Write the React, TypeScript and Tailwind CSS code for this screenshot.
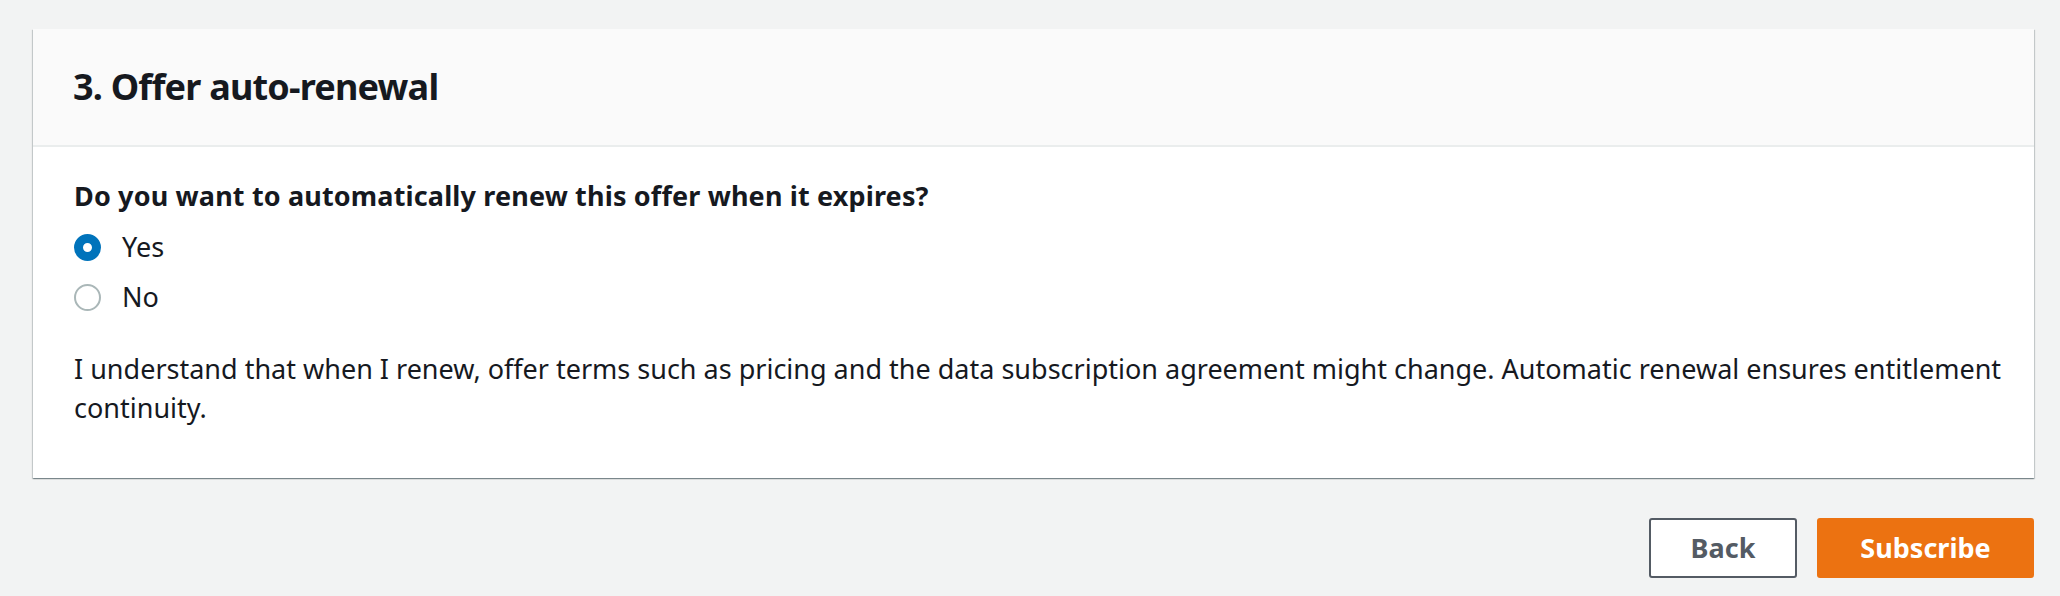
import React, { useState } from 'react';

const App: React.FC = () => {
  const [renew, setRenew] = useState<'yes' | 'no'>('yes');

  const options = [
    { id: 'yes', label: 'Yes' },
    { id: 'no', label: 'No' },
  ] as const;

  return (
    <div
      className="min-h-screen bg-[#f2f3f3] pl-[33px] pr-[26px] pt-[29px] text-[#16191f]"
      style={{ fontFamily: '"Noto Sans", "Open Sans", sans-serif' }}
    >
      {/* Carte principale */}
      <section className="bg-white shadow-[0_1px_1px_0_rgba(0,28,36,0.3),1px_1px_1px_0_rgba(0,28,36,0.15),-1px_1px_1px_0_rgba(0,28,36,0.15)]">
        <header className="bg-[#fafafa] border-b-2 border-[#eaeded] px-[40px] py-[36px]">
          <h2 className="text-[36px] leading-[44px] font-bold tracking-[-0.8px]">3. Offer auto-renewal</h2>
        </header>

        <div className="pl-[41px] pr-[24px] pt-[33px] pb-[51px]">
          <p className="text-[27px] leading-[32px] font-bold tracking-[0.15px]">
            Do you want to automatically renew this offer when it expires?
          </p>

          <div className="mt-[10px] flex flex-col">
            {options.map((opt) => (
              <label
                key={opt.id}
                className="flex h-[50px] items-center gap-[21px] cursor-pointer"
                onClick={() => setRenew(opt.id)}
              >
                <span
                  className={`w-[27px] h-[27px] rounded-full box-border ${
                    renew === opt.id
                      ? 'border-[9px] border-[#0073bb] bg-white'
                      : 'border-2 border-[#aab7b8] bg-white'
                  }`}
                ></span>
                <span className="text-[27px] leading-[36px]">{opt.label}</span>
              </label>
            ))}
          </div>

          <p className="mt-[27px] text-[27px] leading-[39px]">
            I understand that when I renew, offer terms such as pricing and the data subscription agreement might
            change. Automatic renewal ensures entitlement continuity.
          </p>
        </div>
      </section>

      {/* Actions */}
      <div className="mt-[40px] flex justify-end gap-[20px]">
        <button className="w-[148px] h-[60px] rounded-[3px] border-2 border-[#545b64] bg-white text-[27px] font-bold text-[#545b64]">
          Back
        </button>
        <button className="w-[217px] h-[60px] rounded-[3px] bg-[#ec7211] text-[27px] font-bold text-white">
          Subscribe
        </button>
      </div>
    </div>
  );
};

export default App;
